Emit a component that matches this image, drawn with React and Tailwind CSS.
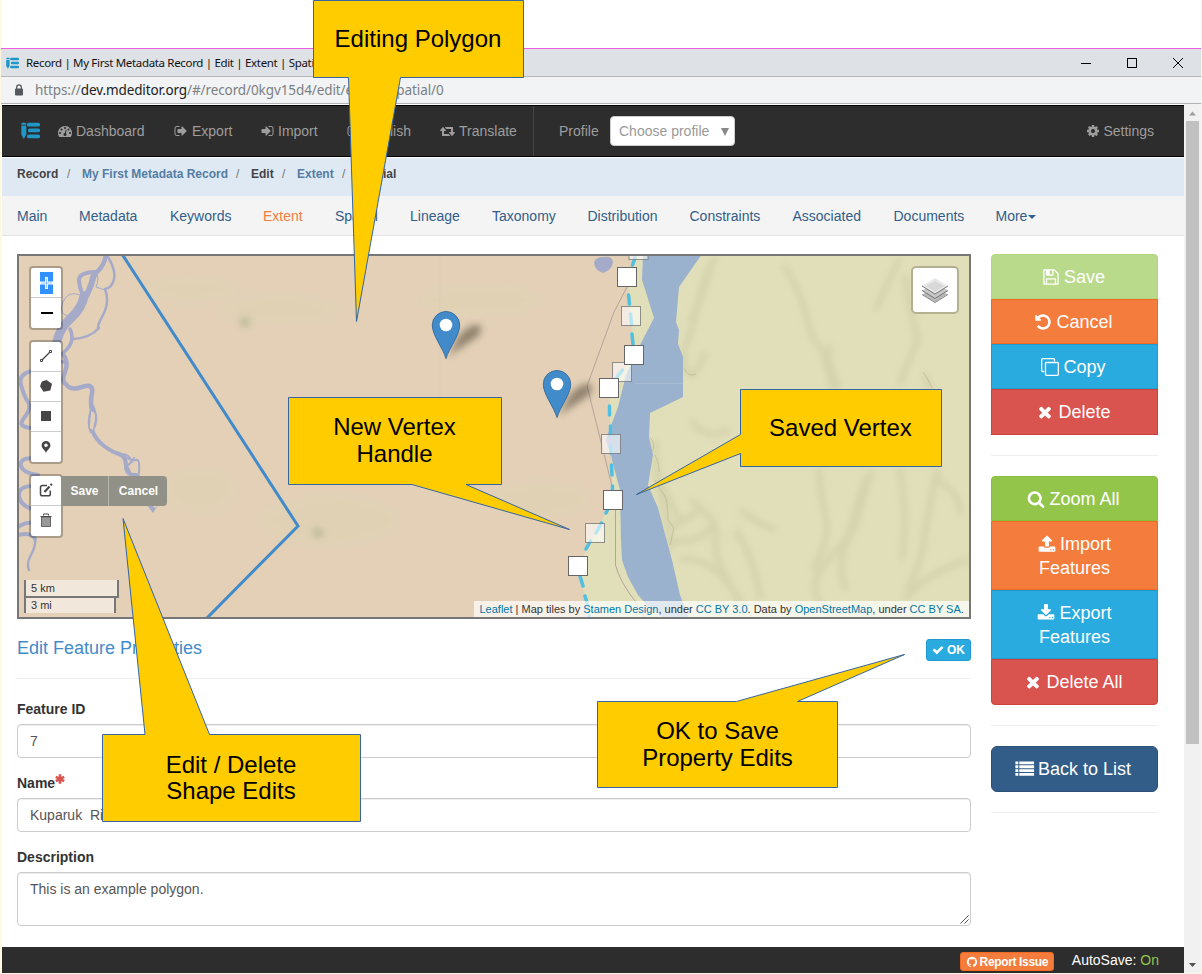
import React from "react";

const P = {
  dash: "M384 1152q0-53-37.5-90.5t-90.5-37.5-90.5 37.5-37.5 90.5 37.5 90.5 90.5 37.5 90.5-37.5 37.5-90.5zm192-448q0-53-37.5-90.5t-90.5-37.5-90.5 37.5-37.5 90.5 37.5 90.5 90.5 37.5 90.5-37.5 37.5-90.5zm428 481l101-382q6-26-7.5-48.5t-38.5-29.5-48 6.5-30 39.5l-101 382q-60 5-107 43.5t-63 98.5q-20 77 20 146t117 89 146-20 89-117q16-60-6-117t-72-91zm660-33q0-53-37.5-90.5t-90.5-37.5-90.5 37.5-37.5 90.5 37.5 90.5 90.5 37.5 90.5-37.5 37.5-90.5zm-640-640q0-53-37.5-90.5t-90.5-37.5-90.5 37.5-37.5 90.5 37.5 90.5 90.5 37.5 90.5-37.5 37.5-90.5zm448 192q0-53-37.5-90.5t-90.5-37.5-90.5 37.5-37.5 90.5 37.5 90.5 90.5 37.5 90.5-37.5 37.5-90.5zm320 448q0 261-141 483-19 29-54 29h-1402q-35 0-54-29-141-221-141-483 0-182 71-348t191-286 286-191 348-71 348 71 286 191 191 286 71 348z",
  out: "M704 1440q0 4 1 20t.5 26.5-3 23.5-10 19.5-20.5 6.5h-320q-119 0-203.5-84.5t-84.5-203.5v-704q0-119 84.5-203.5t203.5-84.5h320q13 0 22.5 9.5t9.5 22.5q0 4 1 20t.5 26.5-3 23.5-10 19.5-20.5 6.5h-320q-66 0-113 47t-47 113v704q0 66 47 113t113 47h312l11.5 1 11.5 3 8 5.5 7 9 2 13.5zm928-544q0 26-19 45l-544 544q-19 19-45 19t-45-19-19-45v-288h-448q-26 0-45-19t-19-45v-384q0-26 19-45t45-19h448v-288q0-26 19-45t45-19 45 19l544 544q19 19 19 45z",
  in: "M1312 896q0 26-19 45l-544 544q-19 19-45 19t-45-19-19-45v-288h-448q-26 0-45-19t-19-45v-384q0-26 19-45t45-19h448v-288q0-26 19-45t45-19 45 19l544 544q19 19 19 45zm352-352v704q0 119-84.5 203.5t-203.5 84.5h-320q-13 0-22.5-9.5t-9.5-22.5q0-4-1-20t-.5-26.5 3-23.5 10-19.5 20.5-6.5h320q66 0 113-47t47-113v-704q0-66-47-113t-113-47h-312l-11.5-1-11.5-3-8-5.5-7-9-2-13.5q0-4-1-20t-.5-26.5 3-23.5 10-19.5 20.5-6.5h320q119 0 203.5 84.5t84.5 203.5z",
  cog: "M1152 896q0-106-75-181t-181-75-181 75-75 181 75 181 181 75 181-75 75-181zm512-109v222q0 12-8 23t-20 13l-185 28q-19 54-39 91 35 50 107 138 10 12 10 25t-9 23q-27 37-99 108t-94 71q-12 0-26-9l-138-108q-44 23-91 38-16 136-29 186-7 28-36 28h-222q-14 0-24.5-8.5t-11.5-21.5l-28-184q-49-16-90-37l-141 107q-10 9-25 9-14 0-25-11-126-114-165-168-7-10-7-23 0-12 8-23 15-21 51-66.5t54-70.5q-27-50-41-99l-183-27q-13-2-21-12.5t-8-23.5v-222q0-12 8-23t19-13l186-28q14-46 39-92-40-57-107-138-10-12-10-24 0-10 9-23 26-36 98.5-107.5t94.5-71.5q13 0 26 10l138 107q44-23 91-38 16-136 29-186 7-28 36-28h222q14 0 24.5 8.5t11.5 21.5l28 184q49 16 90 37l142-107q9-9 24-9 13 0 25 10 129 119 165 170 7 8 7 22 0 12-8 23-15 21-51 66.5t-54 70.5q26 50 41 98l183 28q13 2 21 12.5t8 23.5z",
  retweet: "M1280 1504q0 13-9.5 22.5t-22.5 9.5h-960q-8 0-13.5-2t-9-7-5.5-8-3-11.5-1-11.5v-600h-192q-26 0-45-19t-19-45q0-24 15-41l320-384q19-22 49-22t49 22l320 384q15 17 15 41 0 26-19 45t-45 19h-192v384h576q16 0 25 11l160 192q7 10 7 21zm640-416q0 24-15 41l-320 384q-20 23-49 23t-49-23l-320-384q-15-17-15-41 0-26 19-45t45-19h192v-384h-576q-16 0-25-12l-160-192q-7-9-7-20 0-13 9.5-22.5t22.5-9.5h960q8 0 13.5 2t9 7 5.5 8 3 11.5 1 11.5v600h192q26 0 45 19t19 45z",
  save: "M512 1536h768v-384h-768v384zm896 0h128v-896q0-14-10-38.5t-20-34.5l-281-281q-10-10-34-20t-39-10v416q0 40-28 68t-68 28h-576q-40 0-68-28t-28-68v-416h-128v1280h128v-416q0-40 28-68t68-28h832q40 0 68 28t28 68v416zm-384-928v-320q0-13-9.5-22.5t-22.5-9.5h-192q-13 0-22.5 9.5t-9.5 22.5v320q0 13 9.5 22.5t22.5 9.5h192q13 0 22.5-9.5t9.5-22.5zm640 32v928q0 40-28 68t-68 28h-1344q-40 0-68-28t-28-68v-1344q0-40 28-68t68-28h928q40 0 88 20t76 48l280 280q28 28 48 76t20 88z",
  undo: "M1664 896q0 156-61 298t-164 245-245 164-298 61q-172 0-327-72.5t-264-204.5q-7-10-6.5-22.5t8.5-20.5l137-138q10-9 25-9 16 2 23 12 73 95 179 147t225 52q104 0 198.5-40.5t163.5-109.5 109.5-163.5 40.5-198.5-40.5-198.5-109.5-163.5-163.5-109.5-198.5-40.5q-98 0-188 35.5t-160 101.5l137 138q31 30 14 69-17 40-59 40h-448q-26 0-45-19t-19-45v-448q0-42 40-59 39-17 69 14l130 129q107-101 244.5-156.5t284.5-55.5q156 0 298 61t245 164 164 245 61 298z",
  clone: "M1664 1632v-1088q0-13-9.5-22.5t-22.5-9.5h-1088q-13 0-22.5 9.5t-9.5 22.5v1088q0 13 9.500 22.500t22.500 9.500h1088q13 0 22.500-9.500t9.500-22.500zm128-1088v1088q0 66-47 113t-113 47h-1088q-66 0-113-47t-47-113v-1088q0-66 47-113t113-47h1088q66 0 113 47t47 113zm-384-384v160h-128v-160q0-13-9.500-22.500t-22.500-9.500h-1088q-13 0-22.500 9.500t-9.500 22.500v1088q0 13 9.500 22.500t22.500 9.500h160v128h-160q-66 0-113-47t-47-113v-1088q0-66 47-113t113-47h1088q66 0 113 47t47 113z",
  times: "M1490 1322q0 40-28 68l-136 136q-28 28-68 28t-68-28l-294-294-294 294q-28 28-68 28t-68-28l-136-136q-28-28-28-68t28-68l294-294-294-294q-28-28-28-68t28-68l136-136q28-28 68-28t68 28l294 294 294-294q28-28 68-28t68 28l136 136q28 28 28 68t-28 68l-294 294 294 294q28 28 28 68z",
  check: "M1671 566q0 40-28 68l-724 724-136 136q-28 28-68 28t-68-28l-136-136-362-362q-28-28-28-68t28-68l136-136q28-28 68-28t68 28l294 295 656-657q28-28 68-28t68 28l136 136q28 28 28 68z",
  search: "M1216 832q0-185-131.5-316.5t-316.5-131.5-316.5 131.5-131.5 316.5 131.5 316.5 316.5 131.5 316.5-131.5 131.5-316.5zm512 832q0 52-38 90t-90 38q-54 0-90-38l-343-342q-179 124-399 124-143 0-273.5-55.5t-225-150-150-225-55.5-273.5 55.5-273.5 150-225 225-150 273.5-55.5 273.5 55.5 225 150 150 225 55.5 273.5q0 220-124 399l343 343q37 37 37 90z",
  upload: "M1344 1472q0-26-19-45t-45-19-45 19-19 45 19 45 45 19 45-19 19-45zm256 0q0-26-19-45t-45-19-45 19-19 45 19 45 45 19 45-19 19-45zm128-224v320q0 40-28 68t-68 28h-1472q-40 0-68-28t-28-68v-320q0-40 28-68t68-28h427q21 56 70.5 92t110.5 36h256q61 0 110.5-36t70.5-92h427q40 0 68 28t28 68zm-325-648q-17 40-59 40h-256v448q0 26-19 45t-45 19h-256q-26 0-45-19t-19-45v-448h-256q-42 0-59-40-17-39 14-69l448-448q18-19 45-19t45 19l448 448q31 30 14 69z",
  download: "M1344 1344q0-26-19-45t-45-19-45 19-19 45 19 45 45 19 45-19 19-45zm256 0q0-26-19-45t-45-19-45 19-19 45 19 45 45 19 45-19 19-45zm128-224v320q0 40-28 68t-68 28h-1472q-40 0-68-28t-28-68v-320q0-40 28-68t68-28h465l135 136q58 56 136 56t136-56l136-136h464q40 0 68 28t28 68zm-325-569q17 41-14 70l-448 448q-18 19-45 19t-45-19l-448-448q-31-29-14-70 17-39 59-39h256v-448q0-26 19-45t45-19h256q26 0 45 19t19 45v448h256q42 0 59 39z",
  list: "M-60 150h290v280h-290zM330 150h1470v280h-1470zM-60 530h290v280h-290zM330 530h1470v280h-1470zM-60 910h290v280h-290zM330 910h1470v280h-1470zM-60 1290h290v280h-290zM330 1290h1470v280h-1470z",
  github: "M896 128q209 0 385.5 103t279.5 279.5 103 385.5q0 251-146.5 451.5t-378.5 277.5q-27 5-40-7t-13-30q0-3 .5-76.5t.5-134.5q0-97-52-142 57-6 102.5-18t94-39 81-66.5 53-105 20.5-150.5q0-119-79-206 37-91-8-204-28-9-81 11t-92 44l-38 24q-93-26-192-26t-192 26q-16-11-42.5-27t-83.5-38.5-85-13.500q-45 113-8 204-79 87-79 206 0 85 20.500 150t52.500 105 80.500 67 94 39 102.500 18q-39 36-49 103-21 10-45 15t-57 5-65.500-21.500-55.500-62.500q-19-32-48.500-52t-49.500-24l-20-3q-21 0-29 4.500t-5 11.500 9 14 13 12l7 5q22 10 43.500 38t31.500 51l10 23q13 38 44 61.500t67 30 69.500 7 55.500-3.500l23-4q0 38 .5 88.500t.5 54.500q0 18-13 30t-40 7q-232-77-378.500-277.500t-146.500-451.500q0-209 103-385.500t279.500-279.500 385.500-103z",
};

function Icon({ d, className = "w-[14px] h-[14px]", box = "0 0 1792 1792" }) {
  return (
    <svg viewBox={box} className={"shrink-0 overflow-visible " + className} fill="currentColor">
      <path d={d} />
    </svg>
  );
}

function Logo({ className }) {
  return (
    <svg viewBox="0 0 19 17" className={className} fill="#1f97c7">
      <path d="M0.300 1.200Q2.800-.4 5.300 1.200V2.800H.3ZM.3 3.600H5.300V12.800L2.800 17 .3 12.800Z" />
      <rect x="6" y="0.800" width="13" height="3.700" rx="1.500" />
      <rect x="7" y="6.600" width="12" height="3.700" rx="1.500" />
      <rect x="6" y="12.500" width="13" height="3.700" rx="1.500" />
    </svg>
  );
}

function TitleBar() {
  return (
    <div className="flex h-[29px] shrink-0 items-center border-t border-b border-t-[#f05ce0] border-b-[#b4b6b9] bg-[#dee1e6] pl-[5px]">
      <Logo className="h-[12px] w-[13px]" />
      <div className="ml-[7px] flex-1 whitespace-nowrap font-['Noto_Sans','Open_Sans',sans-serif] text-[11.5px] tracking-[-0.33px] text-[#111]">
        Record | My First Metadata Record | Edit | Extent | Spatial
      </div>
      <svg viewBox="0 0 110 20" className="mr-[14px] h-[20px] w-[110px]" fill="none" stroke="#000" shapeRendering="crispEdges">
        <path d="M4 10.500h10M50.500 5.500h9v9h-9z" />
        <path d="M96 5l10 10M106 5l-10 10" shapeRendering="auto" />
      </svg>
    </div>
  );
}

function UrlBar() {
  return (
    <div className="flex h-[27px] shrink-0 items-center border-b border-[#b0b2b4] bg-[#f1f3f4] pl-[13px]">
      <svg viewBox="0 0 10 12" className="h-[12px] w-[10px]">
        <rect x="1" y="4.500" width="8" height="7" rx="1" fill="#55585c" />
        <path d="M2.700 5V3.200a2.300 2.300 0 0 1 4.600 0V5" fill="none" stroke="#55585c" strokeWidth="1.300" />
      </svg>
      <div className="ml-[11px] whitespace-nowrap font-['Noto_Sans','Open_Sans',sans-serif] text-[13.500px] tracking-[-0.1px] text-[#7c8084]">
        https://<span className="text-[#202124]">dev.mdeditor.org</span>/#/record/0kgv15d4/edit/extent/spatial/0
      </div>
    </div>
  );
}

function NavItem({ d, label, w, box, iconClass = "w-[14px] h-[14px]", gap = "gap-[4px]" }) {
  return (
    <div className={"flex shrink-0 items-center " + gap + " " + w}>
      <Icon d={d} box={box} className={iconClass} />
      <span>{label}</span>
    </div>
  );
}

function NavBar() {
  return (
    <div className="mt-px flex h-[52px] shrink-0 items-center border-t border-b border-black bg-[#2d2d2d] pl-[19px] text-[14px] text-[#9d9d9d]">
      <Logo className="mr-[18px] mb-[2px] h-[17px] w-[19px]" />
      <NavItem d={P.dash} label="Dashboard" w="w-[116px]" />
      <NavItem d={P.out} label="Export" w="w-[88px]" />
      <NavItem d={P.in} label="Import" w="w-[85px]" box="192 0 1792 1792" gap="gap-[2px]" />
      <NavItem d={P.out} label="Publish" w="w-[93px]" />
      <NavItem d={P.retweet} label="Translate" w="w-[93px]" box="0 0 1920 1792" iconClass="w-[15px] h-[14px]" />
      <div className="h-full w-px bg-[#454545]" />
      <span className="ml-[25px] w-[51px]">Profile</span>
      <div className="flex h-[30px] w-[125px] items-center justify-between rounded-[4px] border border-[#ccc] bg-white pr-[5px] pl-[8px] text-[#999]">
        <span>Choose profile</span>
        <svg viewBox="0 0 8 8" className="mt-[2px] h-[8px] w-[8px]"><path d="M0 0h8l-4 8z" fill="#888" /></svg>
      </div>
      <div className="ml-auto mr-[30px] flex items-center gap-[3px]">
        <Icon d={P.cog} />
        <span>Settings</span>
      </div>
    </div>
  );
}

function Crumbs() {
  const sep = <span className="font-normal text-[#777]">/</span>;
  return (
    <div className="mt-px flex h-[38px] shrink-0 items-start bg-[#dfe9f3] pt-[7px] pl-[15px] text-[12px] leading-[18px] font-bold text-[#444]">
      <span className="w-[50px]">Record</span>
      <span className="w-[15px]">{sep}</span>
      <span className="w-[154px] text-[#557da3]">My First Metadata Record</span>
      <span className="w-[15px]">{sep}</span>
      <span className="w-[31px]">Edit</span>
      <span className="w-[15px]">{sep}</span>
      <span className="w-[45px] text-[#557da3]">Extent</span>
      <span className="w-[15px]">{sep}</span>
      <span>Spatial</span>
    </div>
  );
}

const tabs = [
  ["Main", "w-[62px]"], ["Metadata", "w-[91px]"], ["Keywords", "w-[93px]"], ["Extent", "w-[72px]"],
  ["Spatial", "w-[75px]"], ["Lineage", "w-[82px]"], ["Taxonomy", "w-[95.500px]"], ["Distribution", "w-[102px]"],
  ["Constraints", "w-[103px]"], ["Associated", "w-[101px]"], ["Documents", "w-[102px]"],
];

function Tabs() {
  return (
    <div className="flex h-[40px] shrink-0 items-center border-b border-[#e3e3e3] bg-[#f4f4f4] pt-[2px] pl-[15px] text-[14px] text-[#325d88]">
      {tabs.map(([t, w]) => (
        <span key={t} className={"shrink-0 " + w + (t === "Extent" ? " text-[#f47c3c]" : "")}>{t}</span>
      ))}
      <span className="flex items-center gap-px">
        More
        <svg viewBox="0 0 8 4" className="mt-px h-[4px] w-[8px]"><path d="M0 0h8L4 4z" fill="#325d88" /></svg>
      </span>
    </div>
  );
}

function Pin({ x, y }) {
  return (
    <g transform={`translate(${x} ${y})`}>
      <path d="M2 46 L12 26 Q24 12 33 14 Q38 19 31 26 L10 40Z" fill="#3b3022" opacity="0.480" filter="url(#soft)" />
      <path d="M0 47.500C-3 37-13.700 24.500-13.700 14.200A13.700 13.700 0 0 1 13.700 14.200C13.700 24.500 3 37 0 47.500Z" fill="#428bca" stroke="#3a6f9f" strokeWidth="1" />
      <circle cx="0" cy="14" r="6.300" fill="#fff" />
    </g>
  );
}

const LAKE = "M643 254L642 280 654 318 640 345 626 375 618 407 609 431 606 440 612 460 620 490 621 540 622 560 628 577 638 595 648 606 664 619H689L680 595 672 560 658 508 648 485 653 455 649 437 650 413 683 397 683 357 678 344 679 330 676 322 679 287 702 254Z";
const EDGE = "M639 254L627 277 631 316 634 355 609 388 611 444 613 500 578 566 590 619";

const ridges = [
  "M716 256Q703 278 699 300T684 350Q682 370 692 376Q700 366 706 352",
  "M712 262Q702 300 690 322",
  "M784 265Q800 290 806 315T818 345T832 388",
  "M830 345Q826 360 834 375T832 388",
  "M900 258Q884 290 876 310",
  "M905 275Q910 310 918 340Q905 368 900 385",
  "M925 373Q928 385 932 390",
  "M818 468Q822 500 826 520T812 570",
  "M872 470Q856 520 856 525T828 560T832 616",
  "M866 476Q850 530 844 550T846 590",
  "M900 468Q905 510 905 520T902 560",
  "M938 468Q928 510 924 540T906 590",
  "M938 480Q962 495 960 515",
  "M690 500Q720 520 716 540T740 600",
  "M668 528Q690 520 700 508M672 540Q700 545 714 524",
  "M680 560Q700 555 720 575T742 612",
  "M740 510Q760 525 776 530",
  "M735 530Q756 560 760 600",
  "M655 440Q656 470 660 490T672 550",
  "M904 600Q930 570 969 560",
  "M655 470Q668 500 680 520M692 420Q700 440 730 430",
];

function MapDrawing() {
  const solid = [[627, 277], [634, 355], [609, 388], [613, 500], [578, 566]];
  const ghost = [[638.500, 250], [631, 316], [622, 372], [611, 444], [595, 533]];
  return (
    <svg viewBox="19 256 950 361" className="block h-[361px] w-[950px]">
      <defs>
        <filter id="soft" x="-50%" y="-50%" width="200%" height="200%"><feGaussianBlur stdDeviation="3.500" /></filter>
        <filter id="relief" x="-10%" y="-10%" width="120%" height="120%"><feGaussianBlur stdDeviation="3" /></filter>
      </defs>
      <rect x="19" y="256" width="950" height="361" fill="#e1dfb9" />
      <g fill="none" stroke="#b0ae8e" strokeWidth="6" opacity="0.250" filter="url(#relief)">
        {ridges.map((d) => <path key={d} d={d} />)}
      </g>
      <g fill="none" stroke="#8e8b6c" strokeWidth="1" opacity="0.300">
        <path d="M650 437Q656 445 652 452M655 455Q660 465 659 472M655 480Q660 490 664 495T668 520L674 528 670 545" />
        <path d="M684 368Q688 378 696 374M923 372Q929 380 932 388" />
      </g>
      <path d={LAKE} fill="#9ab2cd" />
      <path d="M635 383.500H683" stroke="#a7bcd2" />
      <path d={EDGE + "H19V254Z"} fill="#e3d0b7" />
      <path d="M609 431L606 440 611 457V436Z" fill="#a2a9c9" />
      <g fill="#ddd5b4" opacity="0.350" filter="url(#soft)">
        <ellipse cx="190" cy="290" rx="50" ry="14" /><ellipse cx="280" cy="310" rx="60" ry="16" />
        <ellipse cx="200" cy="490" rx="36" ry="24" /><ellipse cx="330" cy="520" rx="70" ry="26" />
        <ellipse cx="480" cy="300" rx="60" ry="18" /><ellipse cx="540" cy="500" rx="50" ry="20" />
      </g>
      <g fill="#a0a880" opacity="0.600" filter="url(#soft)">
        <circle cx="245" cy="322" r="5" /><circle cx="318" cy="533" r="5" />
      </g>
      <g fill="none" stroke="#a5aac9" strokeLinecap="round" strokeLinejoin="round">
        <path strokeWidth="4.500" d="M106 255Q104 266 97 272T92 284Q86 296 81 305T70 317" />
        <path strokeWidth="9" d="M84 296Q82 308 71 318T57 341" />
        <path strokeWidth="6" d="M94 275Q90 290 84 300" />
        <path strokeWidth="4" d="M97 272Q78 272 79 281T83 294" />
        <path strokeWidth="2.500" d="M108 257Q116 270 114 279T105 289Q110 302 103 315T99 328Q90 338 73 339" />
        <path strokeWidth="1" d="M96 272Q100 278 96 287L105 290M80 295Q68 290 63 302T68 316" />
        <path strokeWidth="3.500" d="M70 329Q76 342 64 352T66 362" />
        <path strokeWidth="4.500" d="M63 354Q69 362 65 372T66 384Q70 391 82 387T92 393T92 410" />
        <path strokeWidth="2.500" d="M91 410Q87 424 91 432M93 406Q98 418 95 425T93 432" />
        <path strokeWidth="4" d="M92 430Q96 440 104 446T119 454T126 466T137 475L142 482" />
        <path strokeWidth="2" d="M116 452Q132 462 136 460T139 473M126 467Q132 462 134 458M119 455Q128 452 132 462" />
        <path strokeWidth="2.500" d="M128 468L133 480" />
        <path strokeWidth="4" d="M32 371Q18 374 21 385T28 402T24 418T34 428M31 458Q19 459 21 466T38 475M31 486Q18 487 19 496T32 509M18 527Q25 522 33 523M18 535Q32 532 35 539" />
        <path strokeWidth="2.500" d="M35 539Q36 546 31 555T29 570" />
      </g>
      <path d="M146 504H151L155 508 158 505 153 513Z" fill="#a5aac9" />
      <path d="M594 262Q596 257 604 257Q612 256 613 262Q612 270 603 273Q594 270 594 262Z" fill="#a5aac9" />
      <path d="M91 411l4 3-1 6-3-2zM90 423l4 1-1 6-3-2z" fill="#e3d0b7" />
      <path d="M440 257V400" stroke="#dfcbb3" />
      <path d="M627 287L614 312 587 386 612 486M615.500 510V565Q620 582 635 601L644 617" fill="none" stroke="#b7a39b" />
      <path d="M122 254L298 526 206 619" fill="none" stroke="#428bca" strokeWidth="3" />
      <path
        fill="none" stroke="#4fbfe2" strokeWidth="3.500" strokeLinecap="round"
        d="M635 258L632.500 265M628.500 295L629.500 304M630.500 314L631.500 324M632 334L633 344M622.500 370L617 377M609.500 406V415M610.500 426V435M610.500 446L611 453M611.500 465L612 475M612.500 486V490M607.500 510L606 513M601.500 523L596 533M590.500 541L586 549M580 576L583 586M585 596L588 606M589 616L590 620"
      />
      {ghost.map(([x, y]) => <rect key={x + y} x={x - 9.500} y={y - 9.500} width="19" height="19" fill="#fff" fillOpacity="0.600" stroke="#777" strokeOpacity="0.800" />)}
      {solid.map(([x, y]) => <rect key={x} x={x - 9.500} y={y - 9.500} width="19" height="19" fill="#fff" stroke="#666" />)}
      <Pin x={446} y={311} />
      <Pin x={557} y={370} />
    </svg>
  );
}

function ToolButton({ children, last }) {
  return (
    <div className={"flex h-[30px] w-[30px] items-center justify-center " + (last ? "" : "border-b border-[#ccc]")}>
      {children}
    </div>
  );
}

const toolBar = "absolute left-[10px] w-[34px] rounded-[4px] border-2 border-black/25 bg-white bg-clip-padding";

function MapView() {
  return (
    <div className="relative h-[365px] w-[954px] shrink-0 border-2 border-[#777]">
      <MapDrawing />
      <div className={toolBar + " top-[10px]"}>
        <ToolButton>
          <svg viewBox="0 0 13 22" className="ml-px h-[22px] w-[13px]">
            <rect width="13" height="22" fill="#3390ff" />
            <path d="M0 11h13M6.500 5v12" stroke="#fff" strokeWidth="3" />
            <path d="M1 11h11M6.500 6v10" stroke="#3390ff" strokeWidth="0.500" />
          </svg>
        </ToolButton>
        <ToolButton last>
          <div className="ml-[2px] h-[2px] w-[12px] bg-black" />
        </ToolButton>
      </div>
      <div className={toolBar + " top-[84px]"}>
        <ToolButton>
          <svg viewBox="0 0 12 12" className="mb-px h-[12px] w-[12px]" fill="none" stroke="#464646">
            <path d="M2 10L10 2" strokeWidth="1.300" /><path d="M.5 9.500h2v2h-2zM9.500.5h2v2h-2z" />
          </svg>
        </ToolButton>
        <ToolButton>
          <svg viewBox="0 0 12 12" className="mb-px h-[12px] w-[12px]" fill="#464646"><path d="M6.500 0L12 3.800 10.300 10.500 3.500 11.800 0 6.200 1.800 1.500Z" /></svg>
        </ToolButton>
        <ToolButton><div className="mb-px h-[10px] w-[10px] bg-[#464646]" /></ToolButton>
        <ToolButton last>
          <svg viewBox="0 0 10 12" className="mb-px h-[12px] w-[10px]" fill="#464646"><path fillRule="evenodd" d="M5 12C4.500 9.500.6 7.500.6 4.200a4.400 4.200 0 0 1 8.800 0C9.400 7.500 5.500 9.500 5 12ZM5 6a1.800 1.800 0 1 0 0-3.600A1.800 1.800 0 0 0 5 6Z" /></svg>
        </ToolButton>
      </div>
      <div className={toolBar + " top-[218px]"}>
        <ToolButton>
          <svg viewBox="0 0 14 14" className="mb-[2px] h-[14px] w-[14px]" fill="none" stroke="#464646" strokeWidth="1.500">
            <path d="M8 2.500H3.500Q1.500 2.500 1.500 4.500V11Q1.500 12.800 3.500 12.800H9.500Q11.300 12.800 11.300 11V7.500" />
            <path d="M5.500 9L10.500 3.500" strokeWidth="2.200" /><path d="M11.500 2.200L13 1" strokeWidth="2.200" />
          </svg>
        </ToolButton>
        <ToolButton last>
          <svg viewBox="0 0 12 14" className="mb-[2px] h-[14px] w-[12px]">
            <path d="M1.500 4h9v9.500h-9z" fill="#999" stroke="#666" />
            <path d="M.5 3.500h11M3.500 2.500v-1.500h5v1.500" fill="none" stroke="#464646" />
          </svg>
        </ToolButton>
      </div>
      <div className="absolute top-[220px] left-[42px] flex h-[30px] overflow-hidden rounded-r-[4px] bg-[#919187] text-[12px] leading-[30px] font-bold text-white">
        <span className="w-[48px] border-r border-[#b5b5ad] text-center">Save</span>
        <span className="w-[58px] pl-px text-center">Cancel</span>
      </div>
      <div className="absolute top-[10px] right-[10px] flex h-[48px] w-[48px] items-center justify-center rounded-[5px] border-2 border-[#b3b18f] bg-white">
        <svg viewBox="0 0 26 26" className="h-[26px] w-[26px]" strokeLinejoin="round">
          <path d="M0 17.500L13 10l13 7.500L13 25.500Z" fill="#b9b9b9" stroke="#fff" strokeWidth="0.500" />
          <path d="M0 17.500L13 25.500 26 17.500" fill="none" stroke="#888" strokeWidth="1" />
          <path d="M0 13.500L13 6l13 7.500L13 21.500Z" fill="#c6c6c6" />
          <path d="M0 13.500L13 21.500 26 13.500" fill="none" stroke="#777" strokeWidth="1" />
          <path d="M0 9L13 1l13 8L13 17Z" fill="#e9e9e9" />
          <path d="M4 9L13 4l9 5L13 15Z" fill="#d8d8d8" />
          <path d="M0 9L13 17 26 9" fill="none" stroke="#777" strokeWidth="1" />
        </svg>
      </div>
      <div className="absolute bottom-[4px] left-[5px] text-[11px] text-[#333]">
        <div className="h-[18px] w-[95px] border-2 border-t-0 border-[#777] bg-white/50 pl-[5px] leading-[17px]">5 km</div>
        <div className="-mt-[2px] h-[17px] w-[92px] border-2 border-b-0 border-[#777] bg-white/50 pl-[5px] leading-[15px]">3 mi</div>
      </div>
      <div className="absolute right-0 bottom-0 h-[16px] w-[495px] bg-white/70 pl-[5.500px] text-[11px] leading-[16px] whitespace-nowrap text-[#333]">
        <span className="text-[#0078a8]">Leaflet</span> | Map tiles by <span className="text-[#0078a8]">Stamen Design</span>, under{" "}
        <span className="text-[#0078a8]">CC BY 3.0</span>. Data by <span className="text-[#0078a8]">OpenStreetMap</span>, under{" "}
        <span className="text-[#0078a8]">CC BY SA</span>.
      </div>
    </div>
  );
}

function Form() {
  const label = "text-[14px] leading-[20px] font-bold text-[#333]";
  const input = "mt-[5px] rounded-[4px] border border-[#ccc] bg-white px-[12px] text-[14px] leading-[20px] text-[#555] shadow-[inset_0_1px_1px_rgba(0,0,0,0.075)]";
  return (
    <div className="flex flex-col">
      <div className="mt-[17px] flex h-[43px] items-start justify-between border-b border-[#eee]">
        <div className="text-[18px] leading-[24px] text-[#428bca]">Edit Feature Properties</div>
        <div className="mt-[3px] flex h-[22px] w-[45px] items-center justify-center gap-[3px] rounded-[3px] border border-[#1f9ad0] bg-[#29abe0] text-[12px] font-bold text-white">
          <Icon d={P.check} className="h-[12px] w-[12px]" />OK
        </div>
      </div>
      <div className={label + " mt-[20px]"}>Feature ID</div>
      <div className={input + " h-[34px] py-[6px]"}>7</div>
      <div className={label + " mt-[15px] flex"}>
        Name
        <svg viewBox="0 0 10 10" className="mt-[1px] h-[10px] w-[10px]" stroke="#d9534f" strokeWidth="2.600"><path d="M5 .3v9.400M.8 2.800l8.400 4.400M.8 7.200l8.400-4.400" /></svg>
      </div>
      <div className={input + " h-[34px] py-[6px] whitespace-pre"}>{"Kuparuk  River"}</div>
      <div className={label + " mt-[15px]"}>Description</div>
      <div className={input + " relative h-[54px] py-[6px]"}>
        This is an example polygon.
        <svg viewBox="0 0 9 9" className="absolute right-px bottom-px h-[9px] w-[9px]" stroke="#555" strokeWidth="1"><path d="M.5 8.500L8.500.5M4.500 8.500l4-4" /></svg>
      </div>
    </div>
  );
}

function SideButton({ d, label, tone, className = "h-[45px]" }) {
  return (
    <div className={"flex shrink-0 items-center justify-center gap-[4px] border pr-[2px] text-[18px] leading-[24px] text-white " + tone + " " + className}>
      <Icon d={d} className="h-[18px] w-[18px]" />
      <span>{label}</span>
    </div>
  );
}

function TallButton({ d, top, bottom, tone }) {
  return (
    <div className={"flex h-[69px] shrink-0 flex-col items-center justify-center border text-[18px] leading-[24px] text-white " + tone}>
      <span className="flex items-center gap-[4px]"><Icon d={d} className="h-[18px] w-[18px]" />{top}</span>
      <span>{bottom}</span>
    </div>
  );
}

function Sidebar() {
  const orange = "bg-[#f47c3c] border-[#f06a22]";
  const blue = "bg-[#29abe0] border-[#1f9bce]";
  const red = "bg-[#d9534f] border-[#d0403c]";
  return (
    <div className="flex w-[167px] shrink-0 flex-col">
      <SideButton d={P.save} label="Save" tone="bg-[#b9da8b] border-[#b2d580]" className="h-[45px] rounded-t-[4px]" />
      <SideButton d={P.undo} label="Cancel" tone={orange} />
      <SideButton d={P.clone} label="Copy" tone={blue} />
      <SideButton d={P.times} label="Delete" tone={red} className="h-[46px]" />
      <div className="my-[20px] h-px bg-[#eee]" />
      <SideButton d={P.search} label="Zoom All" tone="bg-[#93c54b] border-[#89be3d]" className="h-[45px] rounded-t-[4px]" />
      <TallButton d={P.upload} top="Import" bottom="Features" tone={orange} />
      <TallButton d={P.download} top="Export" bottom="Features" tone={blue} />
      <SideButton d={P.times} label="Delete All" tone={red} className="h-[46px] rounded-b-[4px]" />
      <div className="my-[20px] h-px bg-[#eee]" />
      <SideButton d={P.list} label="Back to List" tone="bg-[#325d88] border-[#2a5078]" className="h-[46px] rounded-[6px] pr-0" />
      <div className="my-[20px] h-px bg-[#eee]" />
    </div>
  );
}

function ScrollBar() {
  return (
    <div className="flex w-[17px] shrink-0 flex-col items-center bg-[#f1f1f1]">
      <svg viewBox="0 0 17 16" className="mt-px h-[16px] w-[17px]"><path d="M5 10.500h7L8.500 6.500z" fill="#a0a0a0" /></svg>
      <div className="h-[623px] w-[13px] bg-[#c1c1c1]" />
      <svg viewBox="0 0 17 16" className="mt-auto mb-px h-[16px] w-[17px]"><path d="M5 6h7L8.500 10z" fill="#505050" /></svg>
    </div>
  );
}

const callouts = [
  "M313.500.5H523.500V77.500H400.500L356.500 321.500 348.500 77.500H313.500Z",
  "M288.500 397.500H501.500V484.500H466L569.500 529.500 412 484.500H288.500Z",
  "M740.500 389.500H941.500V466.500H740.500V453.500L636.500 494.500 740.500 434.500Z",
  "M597.500 701.500H736.500L904.500 654.500 797.500 701.500H837.500V787.500H597.500Z",
  "M102.500 734.500H145L123 518.500 209.500 734.500H360.500V821.500H102.500Z",
];

function Callouts() {
  const text = "absolute text-center text-[24px] leading-[27px] whitespace-nowrap text-black";
  return (
    <div className="pointer-events-none absolute inset-y-0 -left-px w-[1202px]">
      <svg viewBox="0 0 1202 974" className="absolute inset-0 h-[974px] w-[1202px]" fill="#fc0" stroke="#3465a4" strokeWidth="1">
        {callouts.map((d) => <path key={d} d={d} />)}
      </svg>
      <div className={text + " top-[25px] left-[313px] w-[210px]"}>Editing Polygon</div>
      <div className={text + " top-[413px] left-[288px] w-[213px]"}>New Vertex<br />Handle</div>
      <div className={text + " top-[414px] left-[740px] w-[201px]"}>Saved Vertex</div>
      <div className={text + " top-[717px] left-[597px] w-[241px]"}>OK to Save<br />Property Edits</div>
      <div className="absolute top-[752px] left-[102px] w-[258px] text-center text-[24px] leading-[26px] whitespace-nowrap text-black">Edit / Delete<br />Shape Edits</div>
    </div>
  );
}

export default function App() {
  return (
    <div className="relative flex h-[974px] w-[1202px] flex-col overflow-hidden border-r border-l border-r-[#fdf5e4] border-l-[#fff8e0] bg-white pt-[48px] font-['Liberation_Sans',Arial,sans-serif]">
      <TitleBar />
      <UrlBar />
      <div className="flex min-h-0 flex-1 pl-px">
        <div className="flex w-[1182px] shrink-0 flex-col">
          <NavBar />
          <Crumbs />
          <Tabs />
          <div className="flex flex-1 gap-[20px] pt-[18px] pl-[15px]">
            <div className="flex w-[954px] shrink-0 flex-col">
              <MapView />
              <Form />
            </div>
            <Sidebar />
          </div>
          <div className="mb-px flex h-[26px] shrink-0 items-center justify-end bg-[#2d2d2d] pr-[25px] text-[14px] text-white">
            <div className="mt-[3px] mr-[18px] flex h-[19px] w-[94px] items-center justify-center gap-[2px] rounded-[3px] border border-[#f06a22] bg-[#f47c3c] text-[12px] font-bold tracking-[-0.35px] whitespace-nowrap">
              <Icon d={P.github} className="h-[12px] w-[12px]" />Report Issue
            </div>
            AutoSave:&nbsp;<span className="text-[#93c54b]">On</span>
          </div>
        </div>
        <ScrollBar />
      </div>
      <div className="absolute inset-x-0 bottom-0 h-px bg-[#fdf5e4]" />
      <Callouts />
    </div>
  );
}
